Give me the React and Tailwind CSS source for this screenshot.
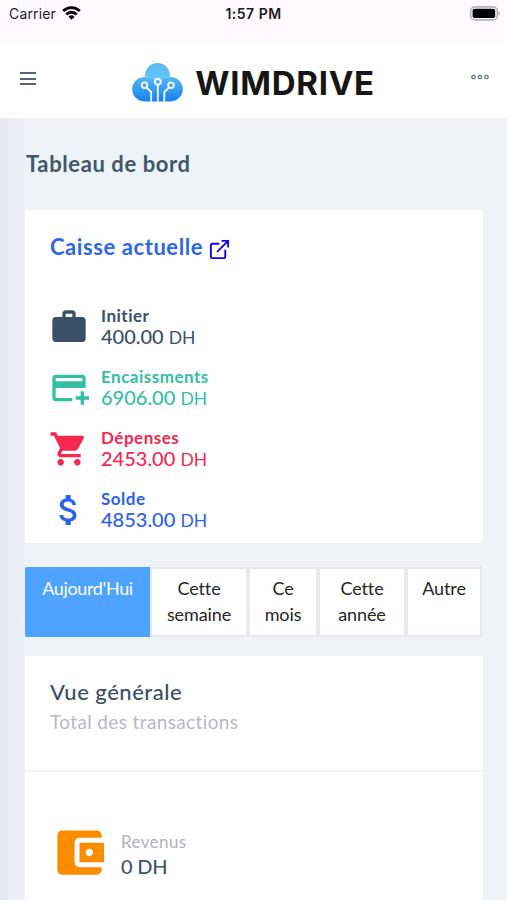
import React from "react";
import { MdWork, MdAddCard, MdShoppingCart, MdAttachMoney, MdAccountBalanceWallet } from "react-icons/md";
import { FiExternalLink } from "react-icons/fi";

const stats = [
  { id: 1, label: "Initier", amount: "400.00", icon: MdWork, color: "text-[#3b5068]" },
  { id: 2, label: "Encaissments", amount: "6906.00", icon: MdAddCard, color: "text-[#34bfa3]" },
  { id: 3, label: "Dépenses", amount: "2453.00", icon: MdShoppingCart, color: "text-[#f5294f]" },
  { id: 4, label: "Solde", amount: "4853.00", icon: MdAttachMoney, color: "text-[#2a62ec]" },
];

const periods = [
  { label: "Aujourd'Hui", width: "w-[125px]", active: true },
  { label: "Cette semaine", width: "w-[98px]" },
  { label: "Ce mois", width: "w-[70px]" },
  { label: "Cette année", width: "w-[88px]" },
  { label: "Autre", width: "w-[76px]" },
];

function StatusBar() {
  return (
    <div className="h-[42px] bg-[#fefaff] px-[9px] pt-[4px] grid grid-cols-3 items-start font-['Inter'] text-[14px] leading-[20px] text-[#1c1c1e]">
      <div className="flex items-center gap-[6px]">
        <span className="tracking-[0.15px]">Carrier</span>
        <svg width="19" height="14" viewBox="0 0 19 14" className="-mt-[2px]" fill="none" stroke="#000" strokeWidth="2.8">
          <path d="M1.2 5a11.8 11.8 0 0 1 16.6 0" />
          <path d="M4.3 8.4a7.4 7.4 0 0 1 10.4 0" />
          <path d="M9.5 13.8l-3-3a4.3 4.3 0 0 1 6 0z" fill="#000" stroke="none" />
        </svg>
      </div>
      <span className="text-center font-semibold tracking-[0.5px]">1:57 PM</span>
      <svg width="32" height="15" viewBox="0 0 32 15" className="justify-self-end mt-[2px] -mr-[3px]">
        <rect x="1.7" y="0.9" width="26.5" height="13" rx="4" fill="#fff" stroke="#b5b3b7" strokeWidth="1.6" />
        <rect x="3.6" y="2.8" width="22.6" height="9.2" rx="1.8" fill="#000" />
        <path d="M29.4 5.2c2.4.9 2.4 3.500 0 4.400z" fill="#b5b3b7" />
      </svg>
    </div>
  );
}

function Logo() {
  return (
    <div className="flex items-center">
      <svg width="51" height="40" viewBox="0 0 51 40">
        <defs>
          <linearGradient id="cloudTop" x1="0" y1="0" x2="0" y2="1">
            <stop offset="0" stopColor="#5ab9f1" />
            <stop offset="1" stopColor="#66c8f8" />
          </linearGradient>
          <linearGradient id="cloudBase" x1="0" y1="0" x2="0" y2="1">
            <stop offset="0" stopColor="#58b7f6" />
            <stop offset="1" stopColor="#1482f3" />
          </linearGradient>
        </defs>
        <path d="M12.4 39.4a12.2 12.2 0 0 1 0-24.4c5 0 8 2.5 13.1 2.5s8.1-2.5 13.1-2.5a12.2 12.2 0 0 1 0 24.4z" fill="url(#cloudBase)" />
        <path d="M13.1 15a12.5 12.5 0 1 1 24.8 0c-5 0-7.6 4-12.4 4s-7.4-4-12.4-4z" fill="url(#cloudTop)" />
        <g fill="none" stroke="#fff" strokeWidth="1.8">
          <circle cx="12.5" cy="23.2" r="2.8" />
          <circle cx="25.8" cy="19.8" r="2.9" />
          <circle cx="39" cy="23.2" r="2.8" />
          <path d="M14.3 25.4l4.9 4.6v9.5M25.8 22.7v16.8M37.2 25.4l-4.9 4.6v9.5" />
        </g>
      </svg>
      <span className="ml-[12px] mt-[3px] font-['Inter'] font-bold text-[33px] leading-[40px] tracking-[0.75px] text-[#161616]">WIMDRIVE</span>
    </div>
  );
}

function Header() {
  return (
    <header className="h-[76px] bg-white flex justify-between pl-[20px] pr-[18px]">
      <div className="mt-[30px] w-[16px] flex flex-col gap-[3.5px]">
        <span className="h-[2px] bg-[#52687a]" />
        <span className="h-[2px] bg-[#52687a]" />
        <span className="h-[2px] bg-[#52687a]" />
      </div>
      <div className="mt-[18px]">
        <Logo />
      </div>
      <svg width="18" height="6" viewBox="0 0 18 6" className="mt-[32px]" fill="none" stroke="#64798a" strokeWidth="1.3">
        <circle cx="2.5" cy="3" r="1.7" />
        <circle cx="9" cy="3" r="1.7" />
        <circle cx="15.5" cy="3" r="1.7" />
      </svg>
    </header>
  );
}

function StatRow({ stat }) {
  const Icon = stat.icon;
  return (
    <div className={`h-[61px] flex items-start ${stat.color}`}>
      <Icon size={40} className="mt-[2px] -ml-[1px]" />
      <div className="ml-[12px]">
        <p className="font-bold text-[17px] leading-[21px] tracking-[0.5px]">{stat.label}</p>
        <p className="font-medium text-[20px] leading-[21px]">
          {stat.amount} <span className="text-[17.5px] font-normal">DH</span>
        </p>
      </div>
    </div>
  );
}

function App() {
  return (
    <div className="w-[507px] h-[900px] overflow-hidden flex flex-col bg-[#edf3f7] font-['Lato',sans-serif] [font-variant-ligatures:none]">
      <StatusBar />
      <Header />

      <main className="flex-1 min-h-0 px-[25px] bg-linear-to-r from-[#e3e9ee] via-[#ebf0f8] via-[14px] to-[#edf3f7] to-[28px]">
        <h1 className="pt-[32px] pl-px h-[92px] font-bold text-[22px] leading-[28px] tracking-[0.6px] text-[#42566a]">Tableau de bord</h1>

        {/* Caisse */}
        <section className="w-[458px] h-[333px] bg-white rounded-[2px] px-[25px] pt-[22px] overflow-hidden">
          <h2 className="flex items-center gap-[5px] h-[30px] font-bold text-[22px] leading-[30px] tracking-[0.57px] text-[#2e66ea]">
            <span>Caisse actuelle</span>
            <FiExternalLink size={23} className="mt-[4px] text-[#1500f0]" />
          </h2>
          <div className="mt-[43px]">
            {stats.map((stat) => (
              <StatRow key={stat.id} stat={stat} />
            ))}
          </div>
        </section>

        {/* Periods */}
        <div className="mt-[24px] flex w-[457px] h-[70px] text-[18px] leading-[26px] text-center">
          {periods.map((p) => (
            <button
              key={p.label}
              className={`${p.width} flex justify-center px-[10px] pt-[6px] border-2 ${
                p.active
                  ? "bg-[#4da3ff] border-[#4da3ff] text-white rounded-l-[2px] tracking-[-0.35px]"
                  : "bg-white border-[#e9e9ec] text-[#262626] tracking-[-0.1px]"
              }`}
            >
              {p.label}
            </button>
          ))}
        </div>

        {/* Vue générale */}
        <section className="mt-[19px] w-[458px] h-[260px] bg-white">
          <div className="h-[116px] px-[25px] pt-[21px] border-b-2 border-[#f3f5f7]">
            <h2 className="font-medium text-[22px] leading-[30px] tracking-[0.5px] text-[#3b5068]">Vue générale</h2>
            <p className="text-[19px] leading-[30px] tracking-[0.37px] text-[#b7babf]">Total des transactions</p>
          </div>
          <div className="flex items-start px-[25px] pt-[51px]">
            <MdAccountBalanceWallet size={59} className="text-[#fb8c00]" />
            <div className="ml-[12px] pt-[7px]">
              <p className="text-[17px] leading-[24px] tracking-[0.4px] text-[#b0b3b8]">Revenus</p>
              <p className="font-medium text-[20px] leading-[25px] tracking-[-0.2px] text-[#3f546a]">0 DH</p>
            </div>
          </div>
        </section>
      </main>
    </div>
  );
}

export default App;
